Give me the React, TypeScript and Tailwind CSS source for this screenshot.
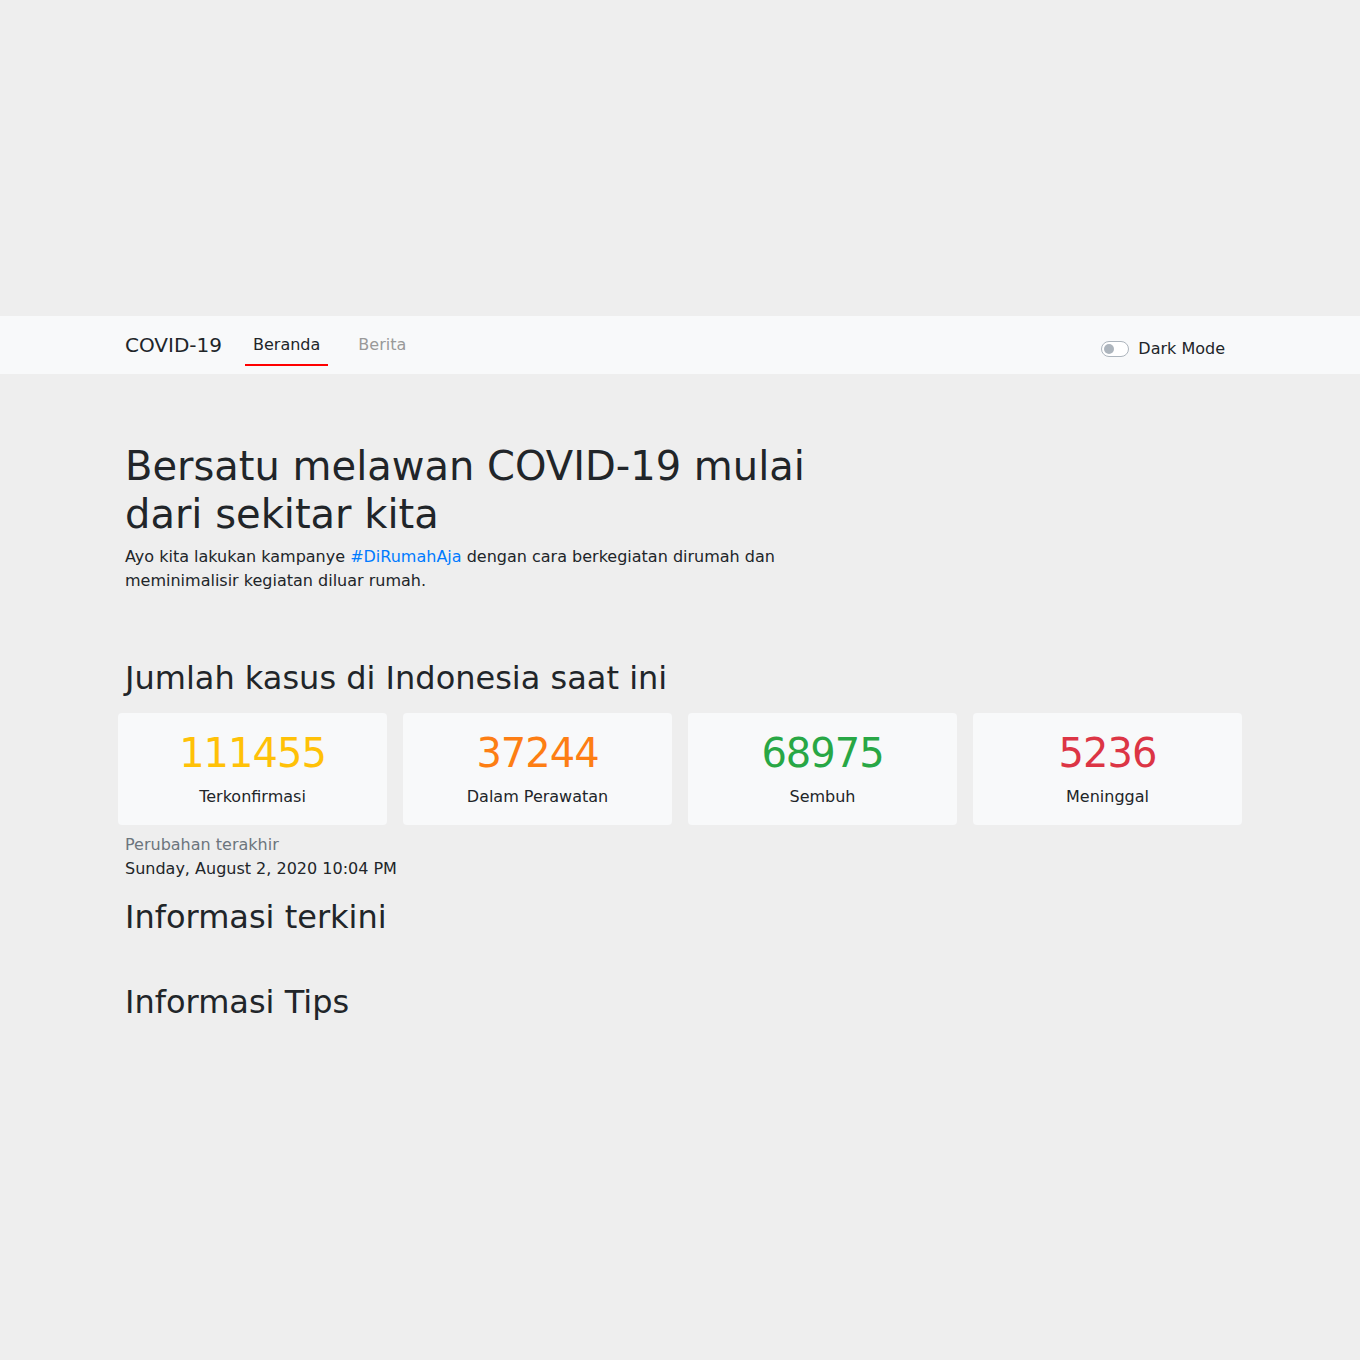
import React from 'react';

const STATS = [
  { value: '111455', label: 'Terkonfirmasi', color: 'text-[#ffc107]' },
  { value: '37244', label: 'Dalam Perawatan', color: 'text-[#fd7e14]' },
  { value: '68975', label: 'Sembuh', color: 'text-[#28a745]' },
  { value: '5236', label: 'Meninggal', color: 'text-[#dc3545]' },
];

export default function App() {
  return (
    <div className="min-h-[1360px] bg-[#eeeeee] text-[#212529] font-['DejaVu_Sans',sans-serif]">
      <div className="h-[316px]" />

      {/* Navbar */}
      <nav className="h-[58px] bg-[#f8f9fa]">
        <div className="mx-auto flex h-full w-[1110px] items-center">
          <span className="text-[20px] leading-none">COVID-19</span>
          <div className="ml-[23px] flex h-full items-center">
            <a className="relative flex h-full items-center px-2 text-[16px]">
              Beranda
              <span className="absolute bottom-[8px] left-0 right-0 h-[2px] bg-[#ff0000]" />
            </a>
            <a className="ml-[22px] px-2 text-[16px] text-[#999]">Berita</a>
          </div>
          <div className="ml-auto mr-[10px] mt-[8px] flex items-center gap-[9px]">
            <span className="relative inline-block h-[16px] w-[28px] rounded-full border border-[#adb5bd] bg-white">
              <span className="absolute left-[2px] top-[2px] h-[10px] w-[10px] rounded-full bg-[#adb5bd]" />
            </span>
            <span className="text-[16px]">Dark Mode</span>
          </div>
        </div>
      </nav>

      <main className="mx-auto w-[1110px]">
        <section className="mt-[68px] w-[700px]">
          <h1 className="text-[40px] font-normal leading-[48px]">
            Bersatu melawan COVID-19 mulai dari sekitar kita
          </h1>
          <p className="mt-[7px] text-[16px] leading-[24px]">
            Ayo kita lakukan kampanye <span className="text-[#007bff]">#DiRumahAja</span> dengan cara
            berkegiatan dirumah dan meminimalisir kegiatan diluar rumah.
          </p>
        </section>

        <h2 className="mt-[65px] text-[32px] leading-[40px]">Jumlah kasus di Indonesia saat ini</h2>
        <div className="-mx-[7px] mt-[15px] grid grid-cols-4 gap-4">
          {STATS.map((s) => (
            <div key={s.label} className="flex h-[112px] flex-col items-center rounded-[4px] bg-[#f8f9fa]">
              <span className={`mt-[16px] text-[40px] leading-[48px] tracking-[-1px] ${s.color}`}>{s.value}</span>
              <span className="mt-[8px] text-[16px] leading-[24px]">{s.label}</span>
            </div>
          ))}
        </div>

        <div className="mt-[8px] text-[16px] leading-[24px]">
          <div className="text-[#6c757d]">Perubahan terakhir</div>
          <div>Sunday, August 2, 2020 10:04 PM</div>
        </div>

        <h2 className="mt-[12px] text-[32px] leading-[48px]">Informasi terkini</h2>
        <h2 className="mt-[37px] text-[32px] leading-[48px]">Informasi Tips</h2>
      </main>
    </div>
  );
}
